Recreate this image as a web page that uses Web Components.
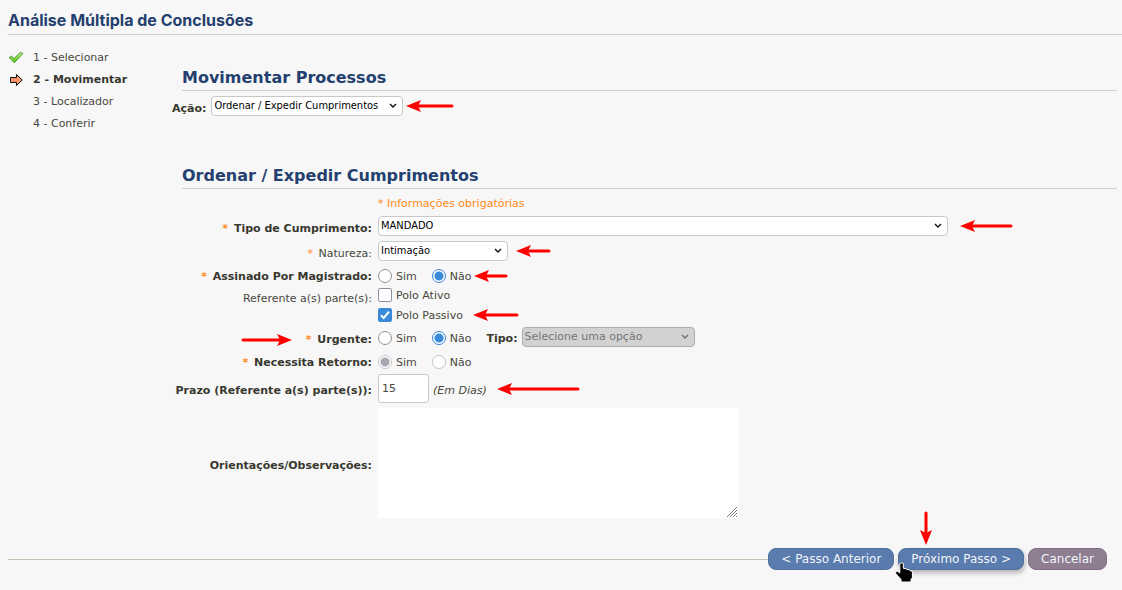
<!DOCTYPE html>
<html lang="pt-BR">
<head>
<meta charset="utf-8">
<meta name="viewport" content="width=device-width, initial-scale=1">
<title>Análise Múltipla de Conclusões</title>
<style>
  body {
    margin: 0;
    background: #f7f7f7;
    color: #484840;
    font: 11px/14px "DejaVu Sans", sans-serif;
  }
</style>
</head>
<body>
<analysis-page></analysis-page>

<script>
const define = (name, html, setup) => {
  const template = document.createElement('template');
  template.innerHTML = html;
  customElements.define(name, class extends HTMLElement {
    constructor() {
      super();
      this.attachShadow({ mode: 'open' }).append(template.content.cloneNode(true));
    }
    connectedCallback() {
      if (setup) setup(this, this.shadowRoot);
    }
  });
};

/* Page title with a rule below it */
define('page-title', `
  <style>
    :host { display: block; border-bottom: 1px solid #cfcfcf; }
    h1 { margin: 0; padding: 10px 0 4px; font: 700 16px/20px Inter, sans-serif; color: #23406f; }
  </style>
  <h1><slot></slot></h1>`);

/* Section heading */
define('section-title', `
  <style>
    :host { display: block; margin: 0 5px 0 10px; border-bottom: 1px solid #cfcfcf; }
    h2 { margin: 0; padding: 2px 0; font: bold 16px/20px "DejaVu Sans", sans-serif; color: #23406f; }
  </style>
  <h2><slot></slot></h2>`);

/* One step of the wizard: state = done | current | pending */
define('wizard-step', `
  <style>
    :host { display: grid; grid-template-columns: 16px 1fr; column-gap: 9px; align-items: center; height: 22px; }
    :host([state="current"]) { font-weight: bold; color: #38382f; }
    svg { display: none; grid-column: 1; }
    span { grid-column: 2; grid-row: 1; }
    :host([state="done"]) .done, :host([state="current"]) .current { display: block; grid-row: 1; }
  </style>
  <svg class="done" width="16" height="16" viewBox="0 0 16 16" aria-hidden="true">
    <defs><linearGradient id="g" x1="0" y1="0" x2="0" y2="1">
      <stop offset="0" stop-color="#c5f0a0"/><stop offset=".55" stop-color="#7fd640"/><stop offset="1" stop-color="#56c012"/>
    </linearGradient></defs>
    <path d="M1.2 7.5 3.6 6.2 6 8.4 12.4 2.4 14.8 3.6 6.3 12.8Z" fill="url(#g)" stroke="#4c9a30" stroke-width="1" stroke-linejoin="round"/>
  </svg>
  <svg class="current" width="16" height="16" viewBox="0 0 16 16" aria-hidden="true">
    <path d="M2.5 5.5H8.5V2.5L14.2 8 8.5 13.500V10.500H2.500Z" fill="#fb9468" stroke="#111" stroke-width="1"/>
  </svg>
  <span><slot></slot></span>`);

/* Label column and control column of the form */
define('form-row', `
  <style>
    :host { display: grid; grid-template-columns: 200px 1fr; column-gap: 6px; align-items: center; min-height: var(--row, 0); }
    .label { padding-top: 5px; line-height: 12px; text-align: right; white-space: nowrap; }
    .field { display: flex; align-items: center; min-width: 0; }
    :host([strong]) .label { font-weight: bold; color: #38382f; }
    :host([stacked]) .label { align-self: start; }
    :host([stacked]) .field { flex-direction: column; align-items: start; gap: 6px; }
    .star { display: none; color: #ff8a1c; margin-right: 2px; }
    :host([required]) .star { display: inline; }
    .wrap { position: relative; display: inline-block; }
  </style>
  <div class="label"><span class="wrap"><slot name="mark"></slot><span class="star">* </span><slot name="label"></slot></span></div>
  <div class="field"><slot></slot></div>`);

/* Red pointer over the form: direction = left | right | down, length in px */
define('callout-arrow', `
  <style>
    :host { position: absolute; pointer-events: none; }
    :host([direction="left"]) { left: calc(100% + var(--gap, 3px)); top: 50%; transform: translateY(-50%); }
    :host([direction="right"]) { right: calc(100% + var(--gap, 4px)); top: 50%; transform: translateY(-50%); }
    :host([direction="down"]) { bottom: calc(100% + var(--gap, 3px)); left: var(--at, 50%); }
    svg { display: block; fill: #f00; stroke: #f00; }
  </style>
  <svg aria-hidden="true"><g><path stroke="none" d="M0 6 15 0 12 6 15 12Z"/><path stroke-width="3" stroke-linecap="round"/></g></svg>`,
  (host, root) => {
    const length = Number(host.getAttribute('length'));
    const direction = host.getAttribute('direction');
    const down = direction === 'down';
    const svg = root.querySelector('svg');
    svg.setAttribute('width', down ? 12 : length);
    svg.setAttribute('height', down ? length : 12);
    root.querySelectorAll('path')[1].setAttribute('d', `M12 6H${length - 2}`);
    if (direction === 'right') root.querySelector('g').setAttribute('transform', `rotate(180 ${length / 2} 6)`);
    if (down) root.querySelector('g').setAttribute('transform', `translate(0 ${length}) rotate(-90)`);
  });

/* Wizard button */
define('action-button', `
  <style>
    :host { display: block; position: relative; }
    button {
      display: block; height: 22px; padding: 0 12px; border: 1px solid #4f719f; border-radius: 8px;
      background: #5a7bad; color: #f2f5fa; font: 12px/20px "DejaVu Sans", sans-serif; white-space: nowrap; cursor: pointer;
    }
    :host([kind="cancel"]) button { background: #8f7d92; border-color: #806f86; }
    :host([active]) button { box-shadow: 1px 3px 5px #0004; }
  </style>
  <button type="button"><slot></slot></button>
  <slot name="over"></slot>`);

/* Hand pointer */
define('hand-pointer', `
  <style>
    :host { position: absolute; left: -3px; top: 14px; pointer-events: none; }
    svg { display: block; }
  </style>
  <svg width="18" height="21" viewBox="0 0 18 21" aria-hidden="true">
    <path d="M4.800 1.500Q6.700 .2 8.300 1.500V6.300L11.200 6.700 11.700 7.500 14.200 7.600 14.800 8.600 16.600 8.900 17.400 10V15.500L16 17.500V20H6V17.500L.7 11.500V9.500L2.500 9.200 4.800 11Z" fill="#000" stroke="#fff" stroke-width="1" stroke-linejoin="round"/>
  </svg>`);

define('analysis-page', `
  <style>
    :host { display: block; padding-left: 8px; }
    .body { display: grid; grid-template-columns: 164px minmax(0, 1fr); padding-top: 12px; }
    nav { padding-bottom: 8px; }
    main { padding-top: 19px; }
    .action { display: flex; align-items: center; gap: 5px; padding: 5px 0 48px; }
    .action label { padding-top: 5px; font-weight: bold; color: #38382f; }
    .rows { display: grid; gap: 5px; padding-top: 8px; }
    .short { --row: 17px; }
    .hint { padding-left: 206px; color: #ff8a1c; }
    .mark { position: relative; display: flex; align-items: center; }
    select, input, textarea { box-sizing: border-box; margin: 0; color: #000; }
    select {
      appearance: none; height: 20px; padding: 0 18px 0 2px; border: 1px solid #c8c8c8; border-radius: 4px;
      font: 11px/18px "DejaVu Sans Condensed", "Noto Sans", sans-serif;
      background: #fff url("data:image/svg+xml,%3Csvg xmlns='http://www.w3.org/2000/svg' width='8' height='6'%3E%3Cpath d='M1 1l3 3 3-3' fill='none' stroke='%23111' stroke-width='1.4'/%3E%3C/svg%3E") no-repeat right 5px center;
    }
    select:disabled {
      font-family: "DejaVu Sans", sans-serif; color: #757575; border-color: #adadad; opacity: 1; background-color: #d2d2d2;
      background-image: url("data:image/svg+xml,%3Csvg xmlns='http://www.w3.org/2000/svg' width='8' height='6'%3E%3Cpath d='M1 1l3 3 3-3' fill='none' stroke='%23707070' stroke-width='1.4'/%3E%3C/svg%3E");
    }
    #acao { width: 192px; }
    #tipo { width: 100%; }
    .wide { width: 570px; max-width: calc(100% - 80px); }
    #natureza { width: 130px; }
    #tipo-urgencia { width: 173px; }
    .options { display: flex; align-items: center; gap: 15px; padding-top: 2px; }
    .option { display: flex; align-items: center; gap: 4px; line-height: 14px; }
    .option span { padding-top: 2px; line-height: 12px; }
    input[type="radio"], input[type="checkbox"] {
      appearance: none; flex: none; width: 14px; height: 14px; border: 1px solid #8f8f9d; background: #fff;
    }
    input[type="radio"] { border-radius: 50%; }
    input[type="checkbox"] { border-radius: 2px; }
    input[type="radio"]:checked { border-color: #3584d8; background: radial-gradient(circle, #3a8ada 4px, #fff 5px); }
    input[type="radio"]:disabled { border-color: #c4c4cc; }
    input[type="radio"]:disabled:checked { background: radial-gradient(circle, #a9a9b4 4px, #fff 5px); }
    input[type="checkbox"]:checked {
      border-color: #3a8ada;
      background: #3a8ada url("data:image/svg+xml,%3Csvg xmlns='http://www.w3.org/2000/svg' width='12' height='12'%3E%3Cpath d='M2 6.3l2.700 2.700L10 2.700' fill='none' stroke='%23fff' stroke-width='2'/%3E%3C/svg%3E") center no-repeat;
    }
    .kind { display: flex; align-items: center; gap: 4px; margin-left: 15px; }
    .kind label { padding-top: 3px; font-weight: bold; color: #38382f; }
    #prazo { width: 51px; height: 29px; padding: 0 3px; border: 1px solid #c8c8c8; border-radius: 3px; background: #fff; font: 11px "DejaVu Sans", sans-serif; color: #484840; }
    .unit { margin-left: 4px; padding-top: 4px; font-style: italic; }
    textarea { display: block; width: 360px; height: 110px; border: 0; background: #fff; resize: both; font: 11px "DejaVu Sans", sans-serif; }
    textarea::-webkit-resizer {
      background: url("data:image/svg+xml,%3Csvg xmlns='http://www.w3.org/2000/svg' width='12' height='12'%3E%3Cpath d='M1 11L11 1M4 11l7-7M7 11l4-4M10 11l1-1' fill='none' stroke='%23777' stroke-width='1'/%3E%3C/svg%3E") right bottom no-repeat;
    }
    footer { display: flex; align-items: center; gap: 4px; padding: 30px 15px 20px 0; }
    footer hr { flex: 1; margin: 0 -4px 0 0; border: 0; border-top: 1px solid #c3c0b4; }
  </style>
  <page-title>Análise Múltipla de Conclusões</page-title>
  <div class="body">
    <nav>
      <wizard-step state="done">1 - Selecionar</wizard-step>
      <wizard-step state="current">2 - Movimentar</wizard-step>
      <wizard-step state="pending">3 - Localizador</wizard-step>
      <wizard-step state="pending">4 - Conferir</wizard-step>
    </nav>
    <main>
      <section-title>Movimentar Processos</section-title>
      <div class="action">
        <label for="acao">Ação:</label>
        <div class="mark"><select id="acao"><option>Ordenar / Expedir Cumprimentos</option></select><callout-arrow direction="left" length="48"></callout-arrow></div>
      </div>
      <section-title>Ordenar / Expedir Cumprimentos</section-title>
      <div class="rows">
        <div class="hint">* Informações obrigatórias</div>
        <form-row strong required>
          <label slot="label" for="tipo">Tipo de Cumprimento:</label>
          <div class="mark wide" style="--gap:12px"><select id="tipo"><option>MANDADO</option></select><callout-arrow direction="left" length="53"></callout-arrow></div>
        </form-row>
        <form-row required>
          <label slot="label" for="natureza">Natureza:</label>
          <div class="mark" style="--gap:8px"><select id="natureza"><option>Intimação</option></select><callout-arrow direction="left" length="35"></callout-arrow></div>
        </form-row>
        <form-row class="short" strong required>
          <span slot="label" id="assinado">Assinado Por Magistrado:</span>
          <div class="options" role="radiogroup" aria-labelledby="assinado">
            <label class="option"><input type="radio" name="assinado"><span>Sim</span></label>
            <label class="option mark"><input type="radio" name="assinado" checked><span>Não</span><callout-arrow direction="left" length="34"></callout-arrow></label>
          </div>
        </form-row>
        <form-row stacked>
          <span slot="label">Referente a(s) parte(s):</span>
          <label class="option"><input type="checkbox"><span>Polo Ativo</span></label>
          <label class="option mark" style="--gap:10px"><input type="checkbox" checked><span>Polo Passivo</span><callout-arrow direction="left" length="46"></callout-arrow></label>
        </form-row>
        <form-row strong required style="--gap:14px">
          <callout-arrow slot="mark" direction="right" length="51"></callout-arrow>
          <span slot="label" id="urgente">Urgente:</span>
          <div class="options" role="radiogroup" aria-labelledby="urgente">
            <label class="option"><input type="radio" name="urgente"><span>Sim</span></label>
            <label class="option"><input type="radio" name="urgente" checked><span>Não</span></label>
          </div>
          <div class="kind">
            <label for="tipo-urgencia">Tipo:</label>
            <select id="tipo-urgencia" disabled><option>Selecione uma opção</option></select>
          </div>
        </form-row>
        <form-row class="short" strong required>
          <span slot="label" id="retorno">Necessita Retorno:</span>
          <div class="options" role="radiogroup" aria-labelledby="retorno">
            <label class="option"><input type="radio" name="retorno" checked disabled><span>Sim</span></label>
            <label class="option"><input type="radio" name="retorno" disabled><span>Não</span></label>
          </div>
        </form-row>
        <form-row strong>
          <label slot="label" for="prazo">Prazo (Referente a(s) parte(s)):</label>
          <input id="prazo" type="text" value="15">
          <span class="unit mark" style="--gap:10px">(Em Dias)<callout-arrow direction="left" length="83"></callout-arrow></span>
        </form-row>
        <form-row strong>
          <label slot="label" for="obs">Orientações/Observações:</label>
          <textarea id="obs"></textarea>
        </form-row>
      </div>
    </main>
  </div>
  <footer>
    <hr>
    <action-button>&lt; Passo Anterior</action-button>
    <action-button active>Próximo Passo &gt;
      <callout-arrow slot="over" direction="down" length="34" style="--at:22px"></callout-arrow>
      <hand-pointer slot="over"></hand-pointer>
    </action-button>
    <action-button kind="cancel">Cancelar</action-button>
  </footer>`);
</script>
</body>
</html>
